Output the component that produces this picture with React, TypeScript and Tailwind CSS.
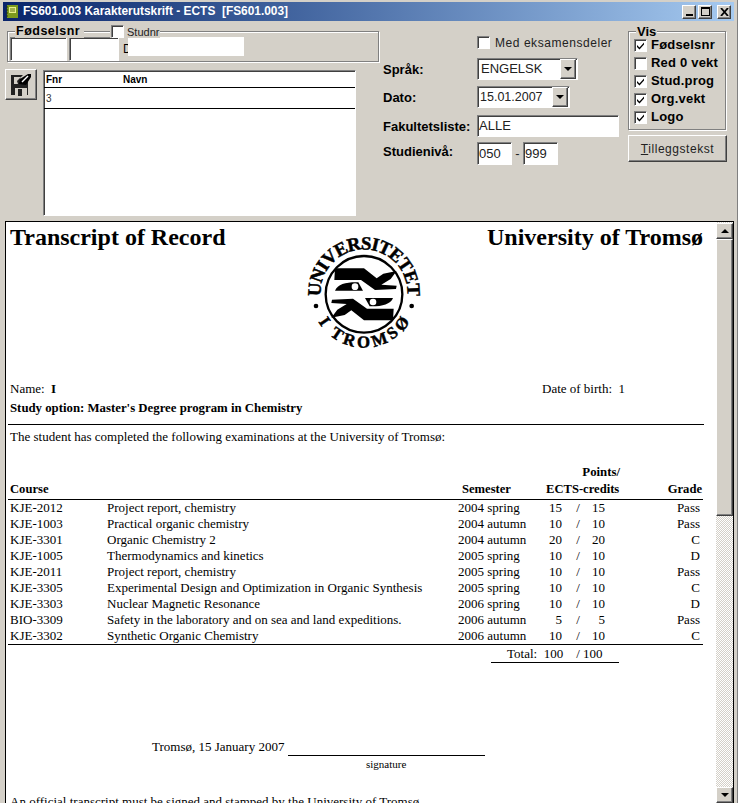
import type { ReactNode } from "react"

const rows = [
  ["KJE-2012", "Project report, chemistry", "2004 spring", "15", "15", "Pass"],
  ["KJE-1003", "Practical organic chemistry", "2004 autumn", "10", "10", "Pass"],
  ["KJE-3301", "Organic Chemistry 2", "2004 autumn", "20", "20", "C"],
  ["KJE-1005", "Thermodynamics and kinetics", "2005 spring", "10", "10", "D"],
  ["KJE-2011", "Project report, chemistry", "2005 spring", "10", "10", "Pass"],
  ["KJE-3305", "Experimental Design and Optimization in Organic Synthesis", "2005 spring", "10", "10", "C"],
  ["KJE-3303", "Nuclear Magnetic Resonance", "2006 spring", "10", "10", "D"],
  ["BIO-3309", "Safety in the laboratory and on sea and land expeditions.", "2006 autumn", "5", "5", "Pass"],
  ["KJE-3302", "Synthetic Organic Chemistry", "2006 autumn", "10", "10", "C"],
]

const sunken =
  "bg-white border border-t-[#808080] border-l-[#808080] border-r-white border-b-white shadow-[inset_1px_1px_0_#404040]"
const raised =
  "bg-[#d4d0c8] border border-t-white border-l-white border-r-[#404040] border-b-[#404040] shadow-[inset_-1px_-1px_0_#808080]"
const etched = "border border-[#808080] shadow-[1px_1px_0_#fff,inset_1px_1px_0_#fff]"
const birdBody = "M135 130h87l38 30 20-14 40-8-18 24-28 17 46 3-2 10-63 3-42-30h-80z"
const birdHead = "M135 197c8-20 35-26 70-25l14 25z"

function Check({ on }: { on?: boolean }) {
  return (
    <span className={`${sunken} w-[13px] h-[13px] shrink-0 flex items-center justify-center`}>
      {on && (
        <svg width="9" height="9" viewBox="0 0 9 9">
          <path d="M1 4l2.500 2.500L8 1.500v2L3.500 8.500 1 6z" fill="#000" />
        </svg>
      )}
    </span>
  )
}

function Arrow() {
  return (
    <span className={`${raised} w-[16px] h-[20px] flex items-center justify-center`}>
      <svg width="8" height="4" viewBox="0 0 8 4">
        <path d="M0 0h8L4 4z" fill="#000" />
      </svg>
    </span>
  )
}

function WinButton({ children }: { children: ReactNode }) {
  return <span className={`${raised} w-[14px] h-[14px] flex items-center justify-center`}>{children}</span>
}

function Label({ children, className }: { children: ReactNode; className?: string }) {
  return <span className={`w-[94px] text-[13px] font-bold text-black ${className ?? ""}`}>{children}</span>
}

function VisRow({ on, children }: { on?: boolean; children: ReactNode }) {
  return (
    <div className="h-[18px] flex items-center gap-[4px] text-[13px] font-bold tracking-[0.2px] text-black">
      <Check on={on} />
      {children}
    </div>
  )
}

function Logo() {
  return (
    <svg width="150" height="130" viewBox="0 0 450 390" className="shrink-0">
      <defs>
        <path id="arc-top" d="M94 226a130 130 0 1 1 256 0" />
        <path id="arc-bottom" d="M70 258a160 160 0 0 0 304 0" />
      </defs>
      <text fontFamily="'Liberation Serif', serif" fontWeight="700" fontSize="56" fill="#000" stroke="#000" strokeWidth="1.5">
        <textPath href="#arc-top" startOffset="50%" textAnchor="middle" textLength="430">
          UNIVERSITETET
        </textPath>
      </text>
      <text fontFamily="'Liberation Serif', serif" fontWeight="700" fontSize="50" fill="#000" stroke="#000" strokeWidth="1.5">
        <textPath href="#arc-bottom" startOffset="50%" textAnchor="middle" textLength="330">
          I TROMSØ
        </textPath>
      </text>
      <circle cx="78" cy="243" r="7" fill="#000" />
      <circle cx="365" cy="243" r="7" fill="#000" />
      <circle cx="222" cy="208" r="115" fill="none" stroke="#000" strokeWidth="7" />
      <path d={birdBody} fill="#000" />
      <path d={birdHead} fill="#000" />
      <circle cx="195" cy="185" r="10" fill="#fff" />
      <g transform="rotate(180 222 208)">
        <path d={birdBody} fill="#000" />
        <path d={birdHead} fill="#000" />
        <circle cx="195" cy="185" r="10" fill="#fff" />
      </g>
    </svg>
  )
}

export default function App() {
  return (
    <div className="w-[738px] h-[803px] overflow-hidden bg-[#d4d0c8] pt-[2px] font-['Liberation_Sans',sans-serif] text-[12px] border-r border-[#808080]">
      <div className="h-[19px] mx-[3px] flex items-center bg-gradient-to-r from-[#0a246a] to-[#a6caf0] pl-[3px] pr-[3px]">
        <svg width="12" height="13" viewBox="0 0 12 13" className="shrink-0">
          <rect x="1" y="0" width="11" height="13" fill="#7c9a1e" />
          <rect x="3" y="2" width="7" height="6" fill="#e8f08a" />
          <path d="M4 4h5M4 6h5" stroke="#5a6f10" />
          <path d="M0 2h2M0 5h2M0 8h2M0 11h2" stroke="#2f3a08" />
        </svg>
        <span className="ml-[5px] text-[11.9px] font-bold text-white whitespace-pre">
          FS601.003 Karakterutskrift - ECTS  [FS601.003]
        </span>
        <div className="ml-auto flex items-center">
          <WinButton>
            <span className="w-[7px] h-[2px] mt-[7px] bg-black" />
          </WinButton>
          <span className="ml-[2px]">
            <WinButton>
              <span className="w-[9px] h-[9px] border border-black border-t-2" />
            </WinButton>
          </span>
          <span className="ml-[5px]">
            <WinButton>
              <svg width="9" height="8" viewBox="0 0 9 8">
                <path d="M1 0l7 8M8 0L1 8" stroke="#000" strokeWidth="1.8" fill="none" />
              </svg>
            </WinButton>
          </span>
        </div>
      </div>

      <div className="h-[200px] flex">
        <div className="w-[383px] shrink-0">
          <div className={`${etched} relative ml-[7px] mt-[10px] w-[372px] h-[31px]`}>
            <div className="absolute -top-[7px] left-[7px] flex items-center bg-[#d4d0c8] pr-[3px]">
              <span className="px-[1px] text-[12.5px] font-bold tracking-[0.5px] leading-[13px] text-black">Fødselsnr</span>
            </div>
            <div className="absolute -top-[7px] left-[102px] flex items-center gap-[3px] bg-[#d4d0c8] pl-[1px] pr-[1px]">
              <Check />
              <span className="text-[11px] leading-[12px] text-[#222]">Studnr</span>
            </div>
            <div className="flex items-start pl-[2px] pt-[5px] text-[12px]">
              <span className={`${sunken} w-[57px] h-[24px]`} />
              <span className={`${sunken} w-[50px] h-[24px] ml-[2px]`} />
              <span className="ml-[4px] mt-[3px] w-[5px] overflow-hidden">D</span>
              <span className="bg-white w-[116px] h-[19px]" />
            </div>
          </div>
          <div className="flex mt-[7px] items-start">
            <button className={`${raised} ml-[5px] w-[32px] h-[31px] flex items-center justify-center`}>
              <svg width="22" height="24" viewBox="0 0 22 24">
                <path d="M1 2h12l-3 3 2 2 5-5h2v1l-1 1v18H1z" fill="#222" />
                <path d="M4 4h7l-4 4 1 3H4z" fill="#d4d0c8" />
                <path d="M9 11l1-5 8-5 3 0 0 3-5 8z" fill="#000" />
                <path d="M12 9l6-6" stroke="#fff" strokeWidth="1.5" />
                <rect x="5" y="15" width="12" height="8" fill="#d4d0c8" />
                <rect x="8" y="16" width="4" height="7" fill="#222" />
              </svg>
            </button>
            <div className={`${sunken} ml-[6px] mt-[1px] w-[313px] h-[146px]`}>
              <div className="h-[17px] border-b border-black flex items-center text-[10px] font-bold text-black">
                <span className="ml-[2px] w-[77px]">Fnr</span>
                <span>Navn</span>
              </div>
              <div className="h-[21px] border-b border-black flex items-center text-[10px] pl-[2px] text-[#333]">3</div>
            </div>
          </div>
        </div>

        <div className="w-[245px] shrink-0 flex flex-col">
          <div className="mt-[15px] h-[13px] pl-[94px] flex items-center gap-[5px] text-[12px] tracking-[0.55px] text-[#222]">
            <Check />
            Med eksamensdeler
          </div>
          <div className="mt-[9px] h-[22px] flex items-center">
            <Label className="mt-[2px]">Språk:</Label>
            <div className={`${sunken} w-[101px] h-full flex items-center pl-[3px] pr-[1px] justify-between text-[13px] text-[#222]`}>
              ENGELSK
              <Arrow />
            </div>
          </div>
          <div className="mt-[6px] h-[22px] flex items-center">
            <Label className="mt-[2px]">Dato:</Label>
            <div className={`${sunken} w-[93px] h-full flex items-center pl-[2px] pr-[1px] justify-between text-[12.5px] text-[#222]`}>
              15.01.2007
              <Arrow />
            </div>
          </div>
          <div className="mt-[7px] h-[22px] flex items-center">
            <Label className="mt-[2px]">Fakultetsliste:</Label>
            <div className={`${sunken} w-[142px] h-full flex items-center pl-[1px] text-[13px] text-[#222]`}>ALLE</div>
          </div>
          <div className="mt-[5px] h-[23px] flex items-center">
            <Label className="mb-[4px]">Studienivå:</Label>
            <div className={`${sunken} w-[35px] h-full flex items-center pl-[1px] text-[13px] text-[#222]`}>050</div>
            <span className="w-[11px] text-center text-[13px] text-[#222]">-</span>
            <div className={`${sunken} w-[35px] h-full flex items-center pl-[1px] text-[13px] text-[#222]`}>999</div>
          </div>
        </div>

        <div className="w-[99px] shrink-0">
          <div className={`${etched} relative mt-[10px] w-[98px] h-[99px] pl-[5px] pt-[4px]`}>
            <span className="absolute -top-[7px] left-[7px] bg-[#d4d0c8] px-[1px] text-[13px] font-bold leading-[13px] text-black">
              Vis
            </span>
            <VisRow on>Fødselsnr</VisRow>
            <VisRow>Red 0 vekt</VisRow>
            <VisRow on>Stud.prog</VisRow>
            <VisRow on>Org.vekt</VisRow>
            <VisRow on>Logo</VisRow>
          </div>
          <button className={`${raised} mt-[5px] w-[99px] h-[27px] text-[12px] tracking-[0.55px] text-[#222]`}>
            <span className="underline">T</span>illeggstekst
          </button>
        </div>
      </div>

      <div className="ml-[5px] w-[729px] h-[582px] flex border-l border-t border-r border-black">
        <div className="w-[710px] h-full overflow-hidden bg-white pl-[4px] font-['Liberation_Serif',serif] text-[13px] leading-[16px] text-black">
          <div className="h-[159px] flex items-start">
            <h1 className="w-[280px] mt-[1px] text-[24px] leading-[28px] font-bold">Transcript of Record</h1>
            <div className="mt-[3px]">
              <Logo />
            </div>
            <h2 className="w-[263px] mt-[1px] text-right text-[24px] leading-[28px] font-bold whitespace-nowrap">
              University of Tromsø
            </h2>
          </div>
          <div className="h-[16px] flex">
            <span className="w-[532px]">
              Name: <b className="ml-[3px]">I</b>
            </span>
            <span>Date of birth:&nbsp; 1</span>
          </div>
          <div className="mt-[3px] text-[12.8px] font-bold">Study option: Master's Degree program in Chemistry</div>
          <div className="mt-[8px] w-[696px] -ml-[2px] border-t border-black" />
          <div className="mt-[4px]">The student has completed the following examinations at the University of Tromsø:</div>

          <div className="mt-[19px] h-[17px] text-[12.8px] font-bold flex justify-end w-[610px]">Points/</div>
          <div className="h-[18px] text-[12.6px] font-bold flex items-start">
            <span className="w-[452px]">Course</span>
            <span className="w-[84px]">Semester</span>
            <span className="w-[75px] whitespace-nowrap">ECTS-credits</span>
            <span className="w-[81px] text-right">Grade</span>
          </div>
          <div className="w-[695px] -ml-[2px] border-t border-black" />
          <div>
            {rows.map((r) => (
              <div key={r[0]} className="h-[16px] grid grid-cols-[97px_351px_80px_24px_32px_11px_95px] whitespace-nowrap">
                <span>{r[0]}</span>
                <span>{r[1]}</span>
                <span>{r[2]}</span>
                <span className="text-right">{r[3]}</span>
                <span className="text-center">/</span>
                <span className="flex justify-end">{r[4]}</span>
                <span className="text-right">{r[5]}</span>
              </div>
            ))}
          </div>
          <div className="w-[695px] -ml-[2px] border-t border-black" />
          <div className="ml-[481px] w-[128px] h-[18px] border-b border-black flex whitespace-pre pl-[16px] pt-[1px]">
            Total:&nbsp; 100&nbsp;&nbsp;&nbsp; / 100
          </div>
          <div className="mt-[76px] h-[17px] flex items-start">
            <span className="ml-[142px] w-[136px] whitespace-nowrap">Tromsø, 15 January 2007</span>
            <span className="w-[197px] h-[17px] border-b border-black" />
          </div>
          <div className="mt-[2px] ml-[356px] text-[11px] leading-[13px]">signature</div>
          <div className="mt-[23px] whitespace-nowrap">An official transcript must be signed and stamped by the University of Tromsø.</div>
        </div>

        <div className="w-[17px] h-full flex flex-col bg-[repeating-conic-gradient(#d4d0c8_0_25%,#fff_0_50%)] bg-size-[2px_2px]">
          <span className={`${raised} h-[16px] mt-[1px] shrink-0 flex items-center justify-center`}>
            <svg width="8" height="4" viewBox="0 0 8 4">
              <path d="M0 4h8L4 0z" fill="#000" />
            </svg>
          </span>
          <span className={`${raised} h-[277px] shrink-0`} />
          <span className={`${raised} h-[16px] mt-auto shrink-0 flex items-center justify-center`}>
            <svg width="8" height="4" viewBox="0 0 8 4">
              <path d="M0 0h8L4 4z" fill="#000" />
            </svg>
          </span>
        </div>
      </div>
    </div>
  )
}
